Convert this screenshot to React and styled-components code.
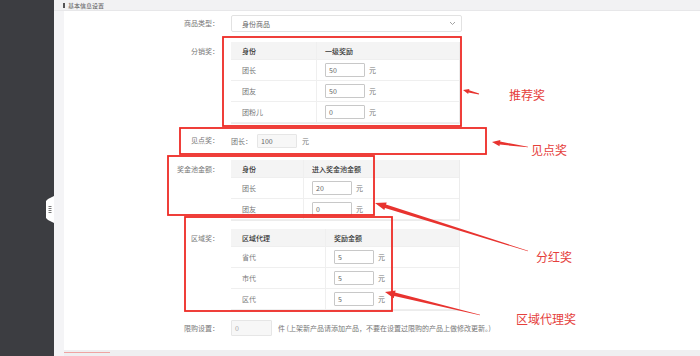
import React from "react";
import styled, { createGlobalStyle } from "styled-components";

const Global = createGlobalStyle`
  html, body { margin: 0; padding: 0; }
  body {
    width: 700px; height: 356px; overflow: hidden;
    font-family: "Noto Sans CJK SC", "Noto Sans", sans-serif;
    background: #f4f4f6;
  }
  * { box-sizing: border-box; }
`;

const Page = styled.div`
  position: relative;
  display: flex;
  width: 700px;
  height: 356px;
`;

const Sidebar = styled.div`
  position: relative;
  width: 54px;
  flex: none;
  background: #3c3d41;
`;

const Toggle = styled.svg`
  position: absolute;
  right: 0;
  top: 196px;
`;

const Main = styled.div`
  flex: 1;
  display: flex;
  flex-direction: column;
  min-width: 0;
`;

const TopBar = styled.div`
  height: 11px;
  flex: none;
  background: #f2f2f3;
  border-bottom: 1px solid #e7e7e9;
  overflow: hidden;
  padding-left: 9px;
  display: flex;
  align-items: center;
  gap: 3px;
`;

const TitleIcon = styled.span`
  width: 2px;
  height: 5px;
  background: #555;
`;

const Title = styled.span`
  font-size: 6px;
  line-height: 7px;
  color: #555;
`;

const Body = styled.div`
  flex: 1;
  display: flex;
  flex-direction: column;
  padding-left: 10px;
  background: #f4f4f6;
`;

const Panel = styled.div`
  flex: 1;
  background: #fff;
  padding-top: 4px;
  display: flex;
  flex-direction: column;
`;

const BottomBar = styled.div`
  height: 6px;
  flex: none;
  background: #efeff1;
  padding-top: 2px;
`;

const BottomTab = styled.div`
  width: 46px;
  height: 1px;
  background: #f0a4a2;
`;

const Row = styled.div`
  display: grid;
  grid-template-columns: 155px 1fr;
  column-gap: 12px;
  margin-top: ${(p) => p.$mt || 0}px;
  align-items: start;
`;

const Label = styled.div`
  text-align: right;
  font-size: 7px;
  color: #777;
  height: ${(p) => p.$h}px;
  line-height: ${(p) => p.$h}px;
  white-space: nowrap;
`;

const Select = styled.div`
  width: 231px;
  height: 17px;
  border: 1px solid #e2e2e2;
  border-radius: 2px;
  display: flex;
  align-items: center;
  justify-content: space-between;
  padding: 0 5px 0 10px;
  font-size: 7px;
  color: #666;
`;

const Table = styled.div`
  width: 229px;
  border: 1px solid #ececec;
  border-top: none;
  border-left: none;
  display: grid;
  grid-template-columns: ${(p) => p.$first}px 1fr;
`;

const Cell = styled.div`
  height: ${(p) => (p.$head ? 18 : 21)}px;
  display: flex;
  align-items: center;
  gap: 4px;
  padding-left: ${(p) => (p.$first ? 11 : 8)}px;
  font-size: 7px;
  color: ${(p) => (p.$head ? "#333" : "#777")};
  font-weight: ${(p) => (p.$head ? 500 : 400)};
  background: ${(p) => (p.$head ? "#f4f4f4" : "#fff")};
  border-bottom: 1px solid #efefef;
  border-right: ${(p) => (p.$first ? "1px solid #efefef" : "none")};
`;

const Input = styled.div`
  width: ${(p) => p.$w || 40}px;
  height: ${(p) => p.$ih || 14}px;
  border: 1px solid ${(p) => (p.$muted ? "#e6e6e6" : "#c8c8c8")};
  background: ${(p) => (p.$muted ? "#f7f7f7" : "#fff")};
  border-radius: 1px;
  font-size: 7px;
  line-height: ${(p) => (p.$ih || 14) - 2}px;
  padding-left: 3px;
  color: ${(p) => (p.$faint ? "#aaa" : "#666")};
`;

const Unit = styled.span`
  font-size: 7px;
  color: #777;
`;

const Inline = styled.div`
  display: flex;
  align-items: center;
  gap: ${(p) => p.$gap || 4}px;
  height: ${(p) => p.$h}px;
  font-size: 7px;
  color: #777;
`;

const Note = styled.span`
  font-size: 7px;
  color: #777;
  white-space: nowrap;
`;

const Overlay = styled.svg`
  position: absolute;
  left: 0;
  top: 0;
  pointer-events: none;
`;

const Callout = styled.span`
  position: absolute;
  left: ${(p) => p.$x}px;
  top: ${(p) => p.$y}px;
  font-size: 12px;
  line-height: 14px;
  color: #e5403c;
  white-space: nowrap;
`;

function arrow(tx, ty, hx, hy, headLen = 9, headW = 7, shaftW = 3.2, tailW = 0.6) {
  const dx = hx - tx;
  const dy = hy - ty;
  const len = Math.hypot(dx, dy);
  const ux = dx / len;
  const uy = dy / len;
  const nx = -uy;
  const ny = ux;
  const bx = hx - ux * headLen;
  const by = hy - uy * headLen;
  const pts = [
    [tx + (nx * tailW) / 2, ty + (ny * tailW) / 2],
    [bx + (nx * shaftW) / 2, by + (ny * shaftW) / 2],
    [bx + (nx * headW) / 2, by + (ny * headW) / 2],
    [hx, hy],
    [bx - (nx * headW) / 2, by - (ny * headW) / 2],
    [bx - (nx * shaftW) / 2, by - (ny * shaftW) / 2],
    [tx - (nx * tailW) / 2, ty - (ny * tailW) / 2],
  ];
  return pts.map((p) => p.map((v) => v.toFixed(1)).join(",")).join(" ");
}

const tables = {
  fx: {
    first: 86,
    head: ["身份", "一级奖励"],
    rows: [
      ["团长", "50"],
      ["团友", "50"],
      ["团粉儿", "0"],
    ],
  },
  pool: {
    first: 73,
    head: ["身份", "进入奖金池金额"],
    rows: [
      ["团长", "20"],
      ["团友", "0"],
    ],
  },
  area: {
    first: 95,
    head: ["区域代理", "奖励金额"],
    rows: [
      ["省代", "5"],
      ["市代", "5"],
      ["区代", "5"],
    ],
  },
};

function RewardTable({ data }) {
  return (
    <Table $first={data.first}>
      <Cell $head $first>{data.head[0]}</Cell>
      <Cell $head>{data.head[1]}</Cell>
      {data.rows.map(([name, val]) => (
        <React.Fragment key={name}>
          <Cell $first>{name}</Cell>
          <Cell>
            <Input>{val}</Input>
            <Unit>元</Unit>
          </Cell>
        </React.Fragment>
      ))}
    </Table>
  );
}

const boxes = [
  [223, 37, 238, 89],
  [180, 128, 306, 26],
  [168, 156, 206, 59],
  [185, 217, 207, 94],
];

export default function App() {
  return (
    <>
      <Global />
      <Page>
        <Sidebar>
          <Toggle width="9" height="27" viewBox="0 0 9 27">
            <polygon points="9,0 3,3 1,5 1,22 3,24 9,27" fill="#fff" />
            <g stroke="#555" strokeWidth="0.8">
              <line x1="3.5" y1="10.5" x2="6.5" y2="10.5" />
              <line x1="3.5" y1="12.5" x2="6.5" y2="12.5" />
              <line x1="3.5" y1="14.5" x2="6.5" y2="14.5" />
              <line x1="3.5" y1="16.5" x2="6.5" y2="16.5" />
            </g>
          </Toggle>
        </Sidebar>
        <Main>
          <TopBar>
            <TitleIcon />
            <Title>基本信息设置</Title>
          </TopBar>
          <Body>
            <Panel>
              <Row>
                <Label $h={17}>商品类型：</Label>
                <Select>
                  <span>身份商品</span>
                  <svg width="7" height="5" viewBox="0 0 7 5">
                    <polyline points="1,1 3.5,3.5 6,1" fill="none" stroke="#999" strokeWidth="0.9" />
                  </svg>
                </Select>
              </Row>
              <Row $mt={10}>
                <Label $h={18}>分销奖：</Label>
                <RewardTable data={tables.fx} />
              </Row>
              <Row $mt={9}>
                <Label $h={15}>见点奖：</Label>
                <Inline $h={15} $gap={5}>
                  <span>团长：</span>
                  <Input $muted>100</Input>
                  <Unit>元</Unit>
                </Inline>
              </Row>
              <Row $mt={12}>
                <Label $h={18}>奖金池金额：</Label>
                <RewardTable data={tables.pool} />
              </Row>
              <Row $mt={8}>
                <Label $h={18}>区域奖：</Label>
                <RewardTable data={tables.area} />
              </Row>
              <Row $mt={9}>
                <Label $h={16}>限购设置：</Label>
                <Inline $h={16} $gap={6}>
                  <Input $muted $faint $w={41} $ih={16}>0</Input>
                  <Note>件 (上架新产品请添加产品，不要在设置过限购的产品上做修改更新。)</Note>
                </Inline>
              </Row>
            </Panel>
            <BottomBar>
              <BottomTab />
            </BottomBar>
          </Body>
        </Main>

        <Overlay width="700" height="356" viewBox="0 0 700 356">
          {boxes.map(([x, y, w, h], i) => (
            <rect key={i} x={x} y={y} width={w} height={h} fill="none" stroke="#ee2b25" strokeWidth="1.8" />
          ))}
          <g fill="#e8332f">
            <polygon points={arrow(479, 94, 463, 90, 6, 5, 2.4, 0.8)} />
            <polygon points={arrow(528, 147, 492, 142, 8, 6.5, 3, 0.6)} />
            <polygon points={arrow(528, 251, 375, 203, 11, 8, 3.6, 0.6)} />
            <polygon points={arrow(480, 315, 385, 292, 10, 8, 3.6, 0.6)} />
          </g>
        </Overlay>
        <Callout $x={509} $y={88}>推荐奖</Callout>
        <Callout $x={531} $y={143}>见点奖</Callout>
        <Callout $x={536} $y={250}>分红奖</Callout>
        <Callout $x={516} $y={312}>区域代理奖</Callout>
      </Page>
    </>
  );
}
